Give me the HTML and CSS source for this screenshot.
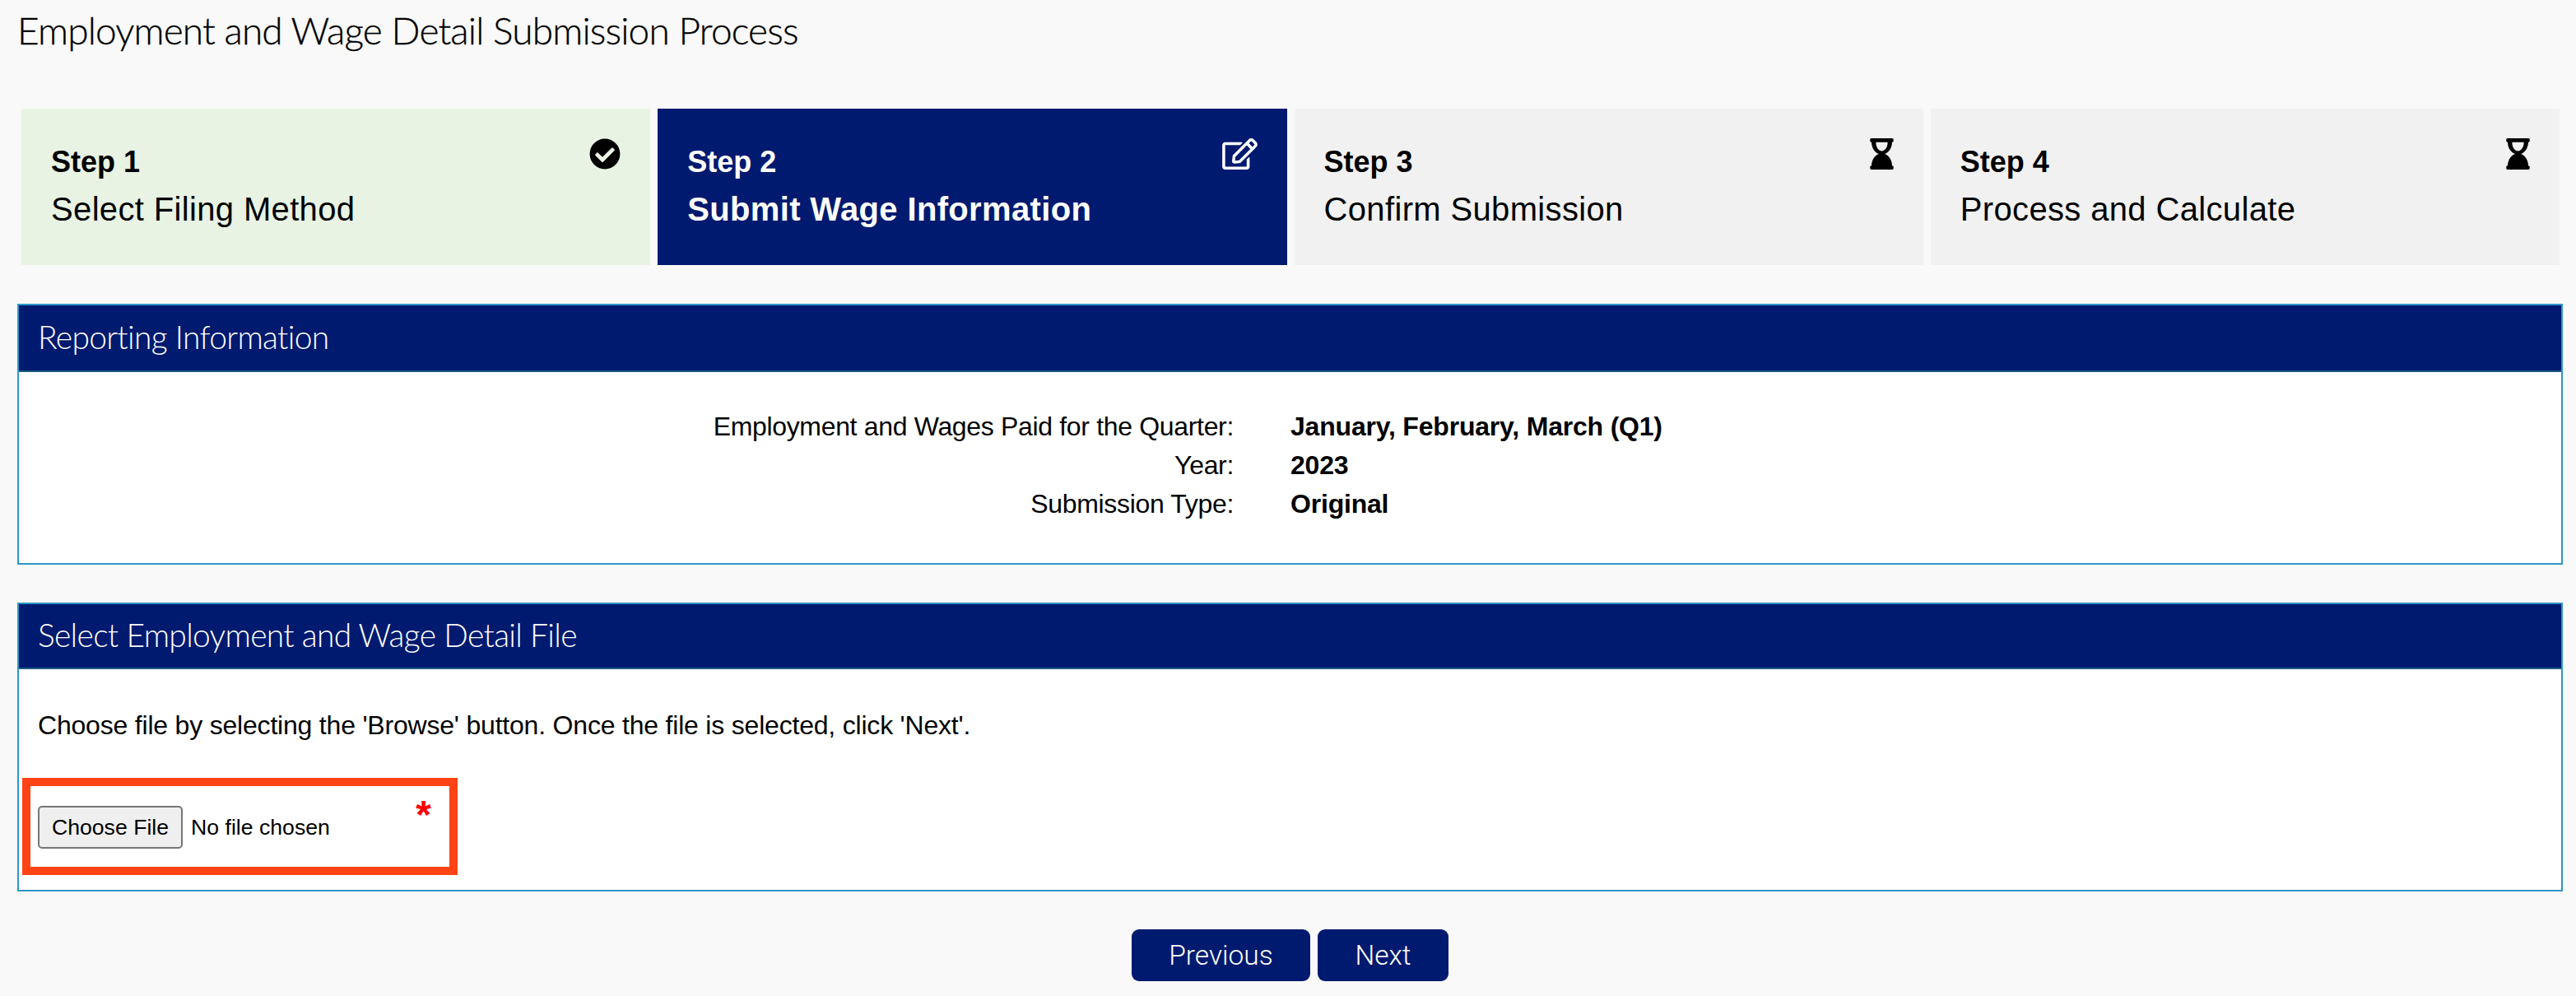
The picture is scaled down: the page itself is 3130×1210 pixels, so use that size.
FILE: index.html
```html
<!DOCTYPE html>
<html lang="en">

<head>
    <meta charset="UTF-8">
    <title>Employment and Wage Detail Submission Process</title>
    <link rel="stylesheet" href="styles.css">
</head>

<body>
    <h1 class="page-title">Employment and Wage Detail Submission Process</h1>

    <div class="steps">
        <div class="step step-done">
            <div class="step-text">
                <div class="step-num">Step 1</div>
                <div class="step-name">Select Filing Method</div>
            </div>
            <svg class="step-icon icon-check" viewBox="0 0 512 512">
                <path d="M504 256c0 136.967-111.033 248-248 248S8 392.967 8 256 119.033 8 256 8s248 111.033 248 248zM227.314 387.314l184-184c6.248-6.248 6.248-16.379 0-22.627l-22.627-22.627c-6.248-6.249-16.379-6.249-22.628 0L216 308.118l-70.059-70.059c-6.248-6.248-16.379-6.248-22.628 0l-22.627 22.627c-6.248 6.248-6.248 16.379 0 22.627l104 104c6.249 6.249 16.379 6.249 22.628.001z"/>
            </svg>
        </div>
        <div class="step step-current">
            <div class="step-text">
                <div class="step-num">Step 2</div>
                <div class="step-name">Submit Wage Information</div>
            </div>
            <svg class="step-icon icon-edit" viewBox="0 0 576 512">
                <path d="M402.3 344.9l32-32c5-5 13.7-1.5 13.7 5.7V464c0 26.5-21.5 48-48 48H48c-26.5 0-48-21.5-48-48V112c0-26.5 21.5-48 48-48h273.5c7.1 0 10.7 8.6 5.7 13.7l-32 32c-1.5 1.5-3.5 2.3-5.7 2.3H48v352h352V350.5c0-2.1.8-4.1 2.3-5.6zm156.6-201.8L296.3 405.7l-90.4 10c-26.2 2.9-48.5-19.2-45.6-45.6l10-90.4L432.9 17.1c22.9-22.9 59.9-22.9 82.7 0l43.2 43.2c22.9 22.9 22.9 60 .1 82.8zM460.1 174L402 115.9 216.2 301.8l-7.3 65.3 65.3-7.3L460.1 174zm64.8-79.7l-43.2-43.2c-4.1-4.1-10.8-4.1-14.8 0L436 82l58.1 58.1 30.9-30.9c4-4.2 4-10.8-.1-14.9z"/>
            </svg>
        </div>
        <div class="step">
            <div class="step-text">
                <div class="step-num">Step 3</div>
                <div class="step-name">Confirm Submission</div>
            </div>
            <svg class="step-icon icon-wait" viewBox="0 0 384 512">
                <path d="M360 64c13.255 0 24-10.745 24-24V24c0-13.255-10.745-24-24-24H24C10.745 0 0 10.745 0 24v16c0 13.255 10.745 24 24 24 0 90.965 51.016 167.734 120.842 192C75.016 280.266 24 357.035 24 448c-13.255 0-24 10.745-24 24v16c0 13.255 10.745 24 24 24h336c13.255 0 24-10.745 24-24v-16c0-13.255-10.745-24-24-24 0-90.965-51.016-167.734-120.842-192C308.984 231.734 360 154.965 360 64zM192 208c-57.787 0-96-65.004-96-144h192c0 79.406-38.424 144-96 144z"/>
            </svg>
        </div>
        <div class="step">
            <div class="step-text">
                <div class="step-num">Step 4</div>
                <div class="step-name">Process and Calculate</div>
            </div>
            <svg class="step-icon icon-wait" viewBox="0 0 384 512">
                <path d="M360 64c13.255 0 24-10.745 24-24V24c0-13.255-10.745-24-24-24H24C10.745 0 0 10.745 0 24v16c0 13.255 10.745 24 24 24 0 90.965 51.016 167.734 120.842 192C75.016 280.266 24 357.035 24 448c-13.255 0-24 10.745-24 24v16c0 13.255 10.745 24 24 24h336c13.255 0 24-10.745 24-24v-16c0-13.255-10.745-24-24-24 0-90.965-51.016-167.734-120.842-192C308.984 231.734 360 154.965 360 64zM192 208c-57.787 0-96-65.004-96-144h192c0 79.406-38.424 144-96 144z"/>
            </svg>
        </div>
    </div>

    <div class="panel">
        <div class="panel-head head-tall">Reporting Information</div>
        <div class="panel-body info-body">
            <div class="info-grid">
                <div class="info-label">Employment and Wages Paid for the Quarter:</div>
                <div class="info-value">January, February, March (Q1)</div>
                <div class="info-label">Year:</div>
                <div class="info-value">2023</div>
                <div class="info-label">Submission Type:</div>
                <div class="info-value">Original</div>
            </div>
        </div>
    </div>

    <div class="panel">
        <div class="panel-head">Select Employment and Wage Detail File</div>
        <div class="panel-body file-body">
            <p class="file-help">Choose file by selecting the 'Browse' button. Once the file is selected, click 'Next'.</p>
            <div class="file-box">
                <input class="file-input" type="file">
                <span class="required">*</span>
            </div>
        </div>
    </div>

    <div class="actions">
        <button class="btn btn-prev" type="button">Previous</button>
        <button class="btn btn-next" type="button">Next</button>
    </div>
</body>

</html>
```
FILE: styles.css
```css
body {
    margin: 0px;
    padding: 0px 16px 0px 21px;
    height: 1210px;
    box-sizing: border-box;
    overflow: hidden;
    background-color: #f9f9f9;
    color: #000;
    font-family: "Liberation Sans", Arial, sans-serif;
}

.page-title {
    margin: 0px;
    height: 132px;
    padding-top: 10px;
    box-sizing: border-box;
    font-family: Lato, sans-serif;
    font-weight: 300;
    font-size: 46px;
    line-height: 54px;
    letter-spacing: -0.85px;
    -webkit-text-stroke: 0.3px #000;
}

.steps {
    display: grid;
    grid-template-columns: repeat(4, 1fr);
    gap: 9px;
    margin: 0px 4px 47px 5px;
}

.step {
    display: flex;
    justify-content: space-between;
    height: 190px;
    box-sizing: border-box;
    padding: 37px 36px 0px 36px;
    background-color: #f1f1f1;
}

.step-done {
    background-color: #e8f3e4;
}

.step-current {
    background-color: #001a70;
    color: #fff;
}

.step-current .step-name {
    font-weight: bold;
}

.step-num {
    font-size: 36px;
    font-weight: bold;
    line-height: 55px;
}

.step-name {
    font-size: 40px;
    line-height: 60px;
    letter-spacing: 0.35px;
}

.step-icon {
    height: 38px;
    margin-top: -1px;
    flex: none;
    fill: currentColor;
}

.icon-check {
    width: 38px;
}

.icon-edit {
    width: 43px;
}

.icon-wait {
    width: 29px;
}

.panel {
    border: 2px solid #2e96c8;
    background-color: #fff;
    margin-bottom: 46px;
}

.panel-head {
    height: 79px;
    box-sizing: border-box;
    padding-left: 23px;
    background-color: #001a70;
    border-bottom: 2px solid #1a5a80;
    color: #fff;
    font-family: Lato, sans-serif;
    font-weight: 300;
    font-size: 39px;
    line-height: 74px;
    letter-spacing: -0.7px;
}

.head-tall {
    height: 81px;
    line-height: 76px;
}

.info-body {
    height: 232px;
    box-sizing: border-box;
    padding-top: 43px;
}

.info-grid {
    display: grid;
    grid-template-columns: 1476px 1fr;
    column-gap: 69px;
    font-size: 32px;
    line-height: 47px;
}

.info-label {
    text-align: right;
    letter-spacing: -0.33px;
}

.info-value {
    font-weight: bold;
    letter-spacing: -0.2px;
}

.file-body {
    height: 268px;
    box-sizing: border-box;
    padding: 45px 0px 0px 4px;
}

.file-help {
    margin: 0px 0px 40px 19px;
    font-size: 32px;
    line-height: 47px;
    letter-spacing: -0.2px;
}

.file-box {
    display: flex;
    justify-content: space-between;
    align-items: flex-start;
    width: 529px;
    height: 118px;
    box-sizing: border-box;
    padding: 24px 22px 0px 9px;
    border: 10px solid #ff4314;
}

.file-input {
    zoom: 2;
    width: 200px;
    font-family: "Liberation Sans", Arial, sans-serif;
}

.file-input::file-selector-button {
    width: 88px;
    height: 26px;
    margin-right: 5px;
}

.required {
    color: #f00;
    font-size: 48px;
    font-weight: bold;
    line-height: 48px;
    margin-top: -13px;
}

.actions {
    display: flex;
    justify-content: center;
    gap: 9px;
}

.btn {
    height: 63px;
    padding: 0px;
    border: none;
    border-radius: 9px;
    background-color: #001a70;
    color: #fff;
    font-family: Roboto, sans-serif;
    font-weight: 300;
    font-size: 33.5px;
}

.btn-prev {
    width: 217px;
}

.btn-next {
    width: 159px;
}
```
